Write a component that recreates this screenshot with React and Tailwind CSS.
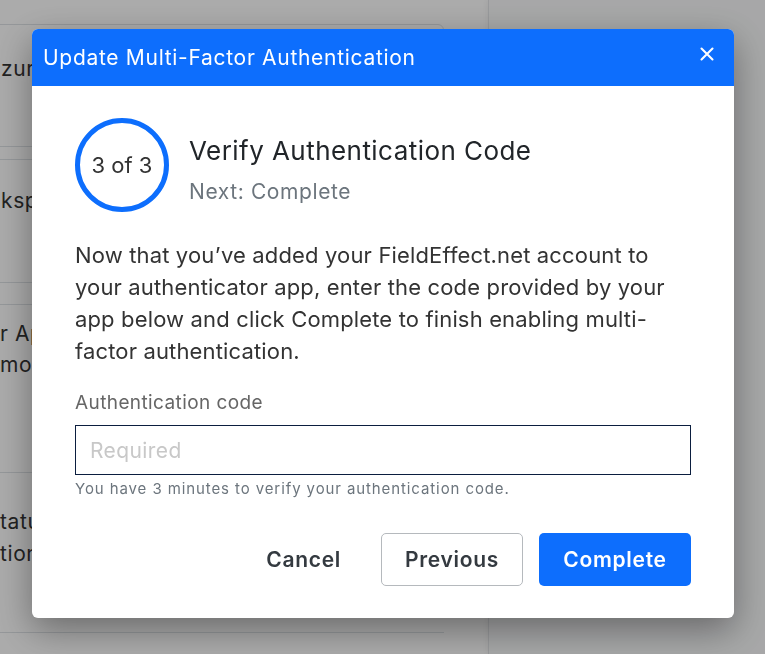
import React from 'react';

const font = { fontFamily: 'Inter, "Noto Sans", sans-serif' };

function BackgroundPage() {
  return (
    <div className="flex min-h-[654px] w-full bg-white text-[21px] tracking-[0.6px] text-[#333]" style={font}>
      {/* Left content column */}
      <div className="w-[488px] shrink-0 pr-[44px]">
        <div className="pt-[24px] -ml-[12px]">
          <div className="h-[123px] rounded-r-md border border-[#dee2e6] pl-[12px] pt-[29px] leading-[30px]">zur</div>
          <div className="mt-[12px] h-[124px] rounded-r-md border border-[#dee2e6] pl-[12px] pt-[26px] leading-[30px]">ksp</div>
        </div>
        <div className="mt-[21px] h-[168px] border-t border-[#dee2e6] pt-[13px] leading-[31px]">
          <div>r Ap</div>
          <div>mor</div>
        </div>
        <div className="h-[160px] border-t border-[#dee2e6] pt-[33px] leading-[32px]">
          <div>tatu</div>
          <div>tion</div>
        </div>
        <div className="border-t border-[#dee2e6]" />
      </div>
      {/* Right side panel */}
      <div className="flex-1 border-l border-[#e3e5e8] bg-[#f9fafb] shadow-[-2px_0_4px_rgba(0,0,0,0.04)]" />
    </div>
  );
}

function CloseIcon() {
  return (
    <svg width="14" height="14" viewBox="0 0 14 14" fill="none">
      <path d="M1.5 1.5L12.5 12.5M12.5 1.5L1.5 12.5" stroke="white" strokeWidth="2.1" strokeLinecap="round" />
    </svg>
  );
}

export default function App() {
  return (
    <div className="relative w-full min-h-[654px] overflow-hidden" style={font}>
      <BackgroundPage />

      {/* Modal backdrop */}
      <div className="fixed inset-0 bg-black/[0.33]">
        <div className="ml-[32px] mt-[29px] w-[702px] overflow-hidden rounded-[6px] bg-white shadow-[0_12px_36px_rgba(0,0,0,0.38)]">
          {/* Header */}
          <div className="flex h-[57px] items-center justify-between bg-[#0d6efd] pl-[11px] pr-[17px]">
            <h2 className="text-[21px] font-normal tracking-[0.7px] text-white">Update Multi-Factor Authentication</h2>
            <button type="button" className="-mt-[8px] flex h-[20px] w-[20px] items-center justify-center">
              <CloseIcon />
            </button>
          </div>

          {/* Body */}
          <div className="px-[43px] pt-[32px] pb-[32px]">
            <div className="flex items-center gap-[20px]">
              <div className="flex h-[94px] w-[94px] shrink-0 items-center justify-center rounded-full border-[5px] border-[#0d6efd] text-[22px] text-[#333]">
                3 of 3
              </div>
              <div className="pt-[10px]">
                <h3 className="text-[26px] leading-[34px] tracking-[0.45px] text-[#212529]">Verify Authentication Code</h3>
                <p className="mt-[10px] text-[21px] leading-[28px] tracking-[0.6px] text-[#6c757d]">Next: Complete</p>
              </div>
            </div>

            <p className="mt-[27px] text-[22px] leading-[32px] tracking-[0.15px] text-[#333]">
              Now that you’ve added your FieldEffect.net account to your authenticator app, enter the code provided by your app below and click Complete to finish enabling multi-factor authentication.
            </p>

            <label className="mt-[24px] block text-[19px] leading-[24px] tracking-[0.4px] text-[#666]">Authentication code</label>
            <input
              type="text"
              placeholder="Required"
              className="mt-[10px] block h-[50px] w-full border border-[#0b1e3f] px-[14px] text-[21px] tracking-[0.4px] text-[#333] outline-none placeholder:text-[#c8c8c8]"
            />
            <p className="mt-[4px] text-[15px] leading-[20px] tracking-[0.9px] text-[#6c757d]">
              You have 3 minutes to verify your authentication code.
            </p>

            <div className="mt-[34px] flex justify-end gap-[16px]">
              <button type="button" className="h-[53px] rounded-[5px] px-[24px] text-[21px] font-semibold tracking-[0.7px] text-[#343a40]">
                Cancel
              </button>
              <button type="button" className="h-[53px] w-[142px] rounded-[5px] border border-[#b5b9bd] text-[21px] font-semibold tracking-[0.7px] text-[#343a40]">
                Previous
              </button>
              <button type="button" className="h-[53px] w-[152px] rounded-[5px] bg-[#0d6efd] text-[21px] font-semibold tracking-[0.7px] text-white">
                Complete
              </button>
            </div>
          </div>
        </div>
      </div>
    </div>
  );
}
